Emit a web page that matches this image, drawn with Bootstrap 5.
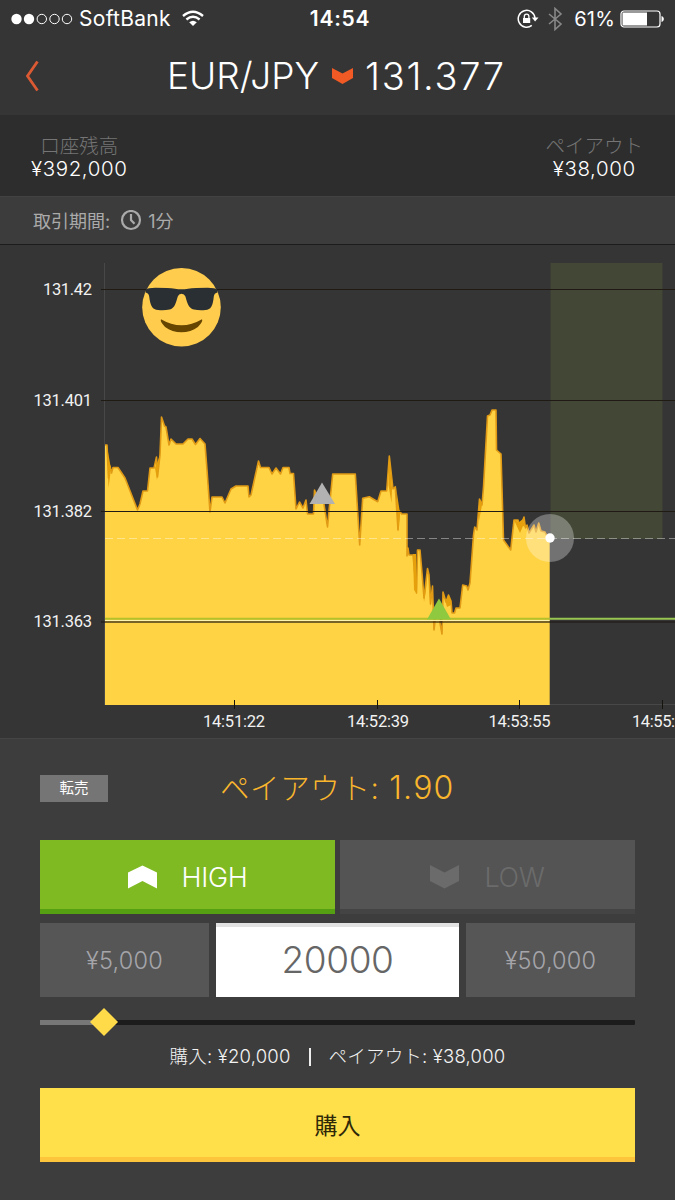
<!DOCTYPE html>
<html lang="ja">
<head>
<meta charset="utf-8">
<meta name="viewport" content="width=device-width, initial-scale=1">
<title>EUR/JPY</title>
<link href="https://cdn.jsdelivr.net/npm/bootstrap@5.3.0/dist/css/bootstrap.min.css" rel="stylesheet">
<style>
body{background:#3d3d3d;color:#fff;font-family:Inter,"Noto Sans CJK JP",sans-serif;font-weight:300;width:675px;height:1200px;overflow:hidden;line-height:1}
svg{display:block;flex:none}
.top-area{background:#353535;height:115px}
.status-row{height:37px;padding:0 11px 0 11px;font-size:20px;font-weight:400}
.status-row .side{width:290px}
.carrier{font-size:21px;letter-spacing:.3px;margin-left:6px;margin-right:11px}
.clock{font-weight:600;font-size:21px;letter-spacing:.7px;margin-left:5px}
.percent{letter-spacing:.2px;margin-left:11px;margin-right:5px}
.title-row{height:78px;padding-left:25px;padding-bottom:1px}
.pair{font-size:37px;margin-left:127px;width:153px}
.rate{font-size:38px;margin-left:12px;letter-spacing:1.7px}
.balance{background:#2d2d2d;height:81px;padding:21px 32px 0 31px;font-size:20.5px}
.balance .cap{color:#757575;font-size:19.5px;line-height:20px;margin-bottom:3px}
.balance .amt{line-height:20px;letter-spacing:.6px}
.period{background:#3c3c3c;height:49px;border-bottom:1px solid #1c1c1c;border-top:1px solid #424242;color:#aaa;font-size:18px;padding-left:33px;font-weight:400}
.period span{padding-top:3px}
.chart{background:#353535;height:493px}
.chart text{font-family:Roboto,sans-serif;font-size:16.5px;font-weight:400;fill:#f2f2f2}
.order{border-top:1px solid #454545;padding:0 40px;height:462px}
.payline{height:101px}
.sell{background:#757575;width:68px;height:27px;font-size:14.5px;font-weight:400;border-radius:0;margin-top:36px}
.payout{color:#f9b62d;font-size:29.5px;margin-left:112px;margin-top:34px;line-height:30px;letter-spacing:.6px}
.payout .multi{font-size:32px;letter-spacing:1.2px;margin-left:1px}
.pick{height:74px;font-size:27px;border-radius:0;border:0;border-bottom:5px solid #559f12;background:#7fba22;width:295px;color:#fff;font-weight:300}
.pick span{padding-top:7px;letter-spacing:-.3px}
.pick svg{margin-top:4px;margin-right:25px}
.pick.off{background:#545454;border-bottom-color:#444;color:#6b6b6b}
.amount{height:74px;background:#565656;color:#a5a5aa;font-size:23.5px;letter-spacing:.2px;width:169px;padding-top:1px}
.amount.entry{background:#fff;border-top:4px solid #e2e2e2;color:#666;font-size:37px;letter-spacing:-.4px;width:243px;padding:0 0 5px}
.slider{height:28px;margin-top:11px}
.track{height:5px;background:#1c1c1c;border-radius:1px}
.track .done{height:5px;background:#777}
.summary{font-size:18.5px;height:21px;margin-top:10px;color:#f3f3f3;letter-spacing:.2px}
.divider{width:2px;height:18px;margin:0 18px;background:#eee}
.buy{height:74px;background:#ffdf4a;border-bottom:5px solid #fdc53b;color:#2e2808;font-size:23px;font-weight:400;margin-top:21px;padding-top:7px}
</style>
</head>
<body>
<header class="top-area">
  <div class="status-row d-flex align-items-center justify-content-between">
    <div class="side d-flex align-items-center">
      <svg width="62" height="12" viewBox="0 0 62 12"><g fill="#fff"><circle cx="5.5" cy="6" r="5.2"/><circle cx="18" cy="6" r="5.2"/></g><g fill="none" stroke="#fff"><circle cx="30.8" cy="6" r="4.7"/><circle cx="43.5" cy="6" r="4.7"/><circle cx="56" cy="6" r="4.7"/></g></svg>
      <span class="carrier">SoftBank</span>
      <svg width="22" height="17" viewBox="0 0 22 17" fill="none" stroke="#fff" stroke-width="2.4"><path d="M1 6Q11-2.5 21 6M4.4 9.5Q11 4 17.6 9.5"/><path d="M11 16L7.2 12.2Q11 9.2 14.8 12.2Z" fill="#fff" stroke="none"/></svg>
    </div>
    <span class="clock">14:54</span>
    <div class="side d-flex align-items-center justify-content-end">
      <svg width="22" height="20" viewBox="0 0 22 20" fill="none" stroke="#fff" stroke-width="1.5"><path d="M14.8 16.4A8.4 8.4 0 1 1 18 9"/><path d="M14.8 8.5H21.5L18.1 12.5Z" fill="#fff" stroke="none"/><path d="M6 9H13.2V14H6Z" fill="#fff" stroke="none"/><path d="M7.3 9V7.5A2.3 2.3 0 0 1 11.9 7.5V9" stroke-width="1.3"/></svg>
      <svg class="ms-2" width="16" height="24" viewBox="0 0 16 24" fill="none" stroke="#888" stroke-width="1.6"><path d="M2 7L14 17L8 22.5V1.5L14 7L2 17"/></svg>
      <span class="percent">61%</span>
      <svg width="44" height="18" viewBox="0 0 44 18"><rect x="1" y="1" width="39" height="16" rx="3" fill="none" stroke="#fff" stroke-width="1.2"/><rect x="2.5" y="2.5" width="24.5" height="13" fill="#fff"/><path d="M41.5 6C44.6 7 44.6 11 41.5 12Z" fill="#fff"/></svg>
    </div>
  </div>
  <div class="title-row d-flex align-items-center">
    <svg width="15" height="32" viewBox="0 0 15 32" fill="none" stroke="#dc5a33" stroke-width="2.8"><path d="M12.5 1.5L2.500 16L12.500 30.500"/></svg>
    <span class="pair text-nowrap">EUR/JPY</span>
    <svg style="margin-left:12px" width="21" height="17" viewBox="0 0 21 17"><path d="M0 1L10.500 6.500L21 1V11L10.500 17L0 11Z" fill="#f15a24"/></svg>
    <span class="rate">131.377</span>
  </div>
</header>
<section class="balance d-flex justify-content-between">
  <div class="text-center"><div class="cap">口座残高</div><div class="amt">¥392,000</div></div>
  <div class="text-center"><div class="cap">ペイアウト</div><div class="amt">¥38,000</div></div>
</section>
<section class="period d-flex align-items-center">
  <span>取引期間:</span>
  <svg style="margin:0 6px 0 10px" width="22" height="22" viewBox="0 0 22 22" fill="none" stroke="#aaa" stroke-width="2.2"><circle cx="11" cy="10" r="9"/><path d="M11 4V10L14.500 13.800"/></svg>
  <span>1分</span>
</section>
<section class="chart">
<svg width="675" height="493" viewBox="0 245 675 493">
  <path d="M104.500 263V705M549 704.500H675" stroke="#484848"/>
  <rect x="550.500" y="263" width="112" height="276" fill="#424736"/>
  <path fill="#ffd343" d="M105 705V445L107 445 108.500 478 110 466 111.500 473 113 467.500H118L125 478 137.500 510 140 504 143 491H147.500L150 468H154L156.500 457 157.500 477 160 455 161.500 417 164.500 426 166 427 169 445 171 439 176 444H183L188 439H192L195.500 444.500 200 438.500 205 444 207 470 210 512 212 497H222L225 503 231 489 236 486H248L249 497 251 495 258.500 461 260.500 467.500H269L272 474 276 468 280.500 474 283 467.500H289L290 473.500H293.500L296 509 299.500 502 303 508 306 500 307.500 514H313.500L314.500 490 318 498H323L327.500 527 329 511 332.700 474H355.300L359.700 545 362.700 498.300 369.300 496.700 377.700 501.700 381 491H386.700L389.300 456 393 489 395.300 486.700 398 530 399.500 511 401.700 514H407V556L408 548 409 555H413L416.500 593 417.500 550H420L422 573 424 598 427.500 568.500 429 575 430.500 604 432.500 586 434 630 436 612H438L442 634 443 592 446 602 448.500 595 451 601 452 613H454.500L456 608H460L462.700 585 466.700 586 468 590 470 583 473.500 535 474.700 527 477 530 479.500 499 482 505 483.500 487 487.500 416 490 415 492 410H496L496.500 450 501 454 503.500 540 510.700 550 514 520H518L520 529 524 517 525.500 528 527 525 529 533 534 525 536 532 538.700 523 541 531 545 532 547 536 549.700 538V705"/>
  <path fill="none" stroke="#e09a16" stroke-width="1.600" stroke-linejoin="round" d="M105 445L107 445 108.500 478 110 466 111.500 473 113 467.500H118L125 478 137.500 510 140 504 143 491H147.500L150 468H154L156.500 457 157.500 477 160 455 161.500 417 164.500 426 166 427 169 445 171 439 176 444H183L188 439H192L195.500 444.500 200 438.500 205 444 207 470 210 512 212 497H222L225 503 231 489 236 486H248L249 497 251 495 258.500 461 260.500 467.500H269L272 474 276 468 280.500 474 283 467.500H289L290 473.500H293.500L296 509 299.500 502 303 508 306 500 307.500 514H313.500L314.500 490 318 498H323L327.500 527 329 511 332.700 474H355.300L359.700 545 362.700 498.300 369.300 496.700 377.700 501.700 381 491H386.700L389.300 456 393 489 395.300 486.700 398 530 399.500 511 401.700 514H407V556L408 548 409 555H413L416.500 593 417.500 550H420L422 573 424 598 427.500 568.500 429 575 430.500 604 432.500 586 434 630 436 612H438L442 634 443 592 446 602 448.500 595 451 601 452 613H454.500L456 608H460L462.700 585 466.700 586 468 590 470 583 473.500 535 474.700 527 477 530 479.500 499 482 505 483.500 487 487.500 416 490 415 492 410H496L496.500 450 501 454 503.500 540 510.700 550 514 520H518L520 529 524 517 525.500 528 527 525 529 533 534 525 536 532 538.700 523 541 531 545 532 547 536 549.700 538"/>
  <path fill="#e5a00c" d="M107 446L108.500 488 111 469ZM155 468L157 480 160 455ZM389.300 456L388.500 485 391.500 503 392 488ZM396 487L398 532 400 513ZM413 554H416L417 594 414 590ZM422 573L424 598 427.500 569 426 590 424 602ZM428.500 570L430.500 588 430.500 609ZM443 592L446 602 448.500 595 451 601V605L447 607ZM479.500 499L482 505 479 521ZM514 520L519 522 523 519 525 527 523 526 520 533Z"/>
  <path d="M101 289.500H675M101 400.500H675M101 511.500H675" stroke="#1f1a14"/>
  <path d="M101 622H675" stroke="#1f1a14" stroke-opacity=".8" stroke-width="1.500"/>
  <path d="M105 620.500H549.500" stroke="#fff3b0" stroke-width="1.200"/>
  <path d="M105 618.800H549.500" stroke="#b5c02d" stroke-width="2"/>
  <path d="M549.500 618.800H675" stroke="#98c650" stroke-width="2"/>
  <path d="M105 538.500H675" stroke="#fff" stroke-opacity=".4" stroke-dasharray="8 4"/>
  <path d="M234.500 700V709M377.500 700V709M519.500 700V709M662.500 700V709" stroke="#17130d"/>
  <path d="M322 482.500L335 504H309.500Z" fill="#b2b2b2"/>
  <path d="M439 598.500L451 619.500H427Z" fill="#8fc93f"/>
  <circle cx="550" cy="538" r="24" fill="#fff" fill-opacity=".3"/><circle cx="550" cy="538" r="4.700" fill="#fff"/>
  <g transform="translate(142.200 268) scale(2.183)"><circle cx="18" cy="18" r="18" fill="#ffcc4d"/><path d="M1.800 9.800Q2.500 9 6 9Q12 9 15 9.500Q18 10 21 9.500Q24 9 30 9Q33.500 9 34.200 9.800L34.500 11.200Q33 11.500 32.800 13C32.300 17.500 31.500 19 29 19.200Q26.200 19.500 23.700 19C21.200 18.500 20.500 15.500 19.800 13Q19.300 11.800 18 11.800Q16.700 11.800 16.300 13C15.500 15.500 15 18.500 12.500 19Q10 19.500 7.300 19.200C4.700 19 3.800 17.500 3.200 13Q3 11.500 1.500 11.200Z" fill="#292f33"/><path d="M8.600 23.500Q18 29 27.400 23.500Q28 24.600 25.500 27C21.500 30.300 14.500 30.300 10.500 27Q8 24.600 8.600 23.500Z" fill="#664500"/></g>
  <g text-anchor="end"><text x="92" y="295" textLength="49">131.42</text><text x="92" y="406" textLength="58.500">131.401</text><text x="92" y="517" textLength="58.500">131.382</text><text x="92" y="627" textLength="58.500">131.363</text></g>
  <text x="203" y="727" textLength="62">14:51:22</text><text x="347" y="727" textLength="62">14:52:39</text><text x="488.500" y="727" textLength="62">14:53:55</text><text x="632" y="727" textLength="43">14:55:</text>
</svg>
</section>
<section class="order">
  <div class="payline d-flex align-items-start">
    <span class="sell d-flex align-items-center justify-content-center">転売</span>
    <span class="payout text-nowrap">ペイアウト: <span class="multi">1.90</span></span>
  </div>
  <div class="d-flex justify-content-between">
    <button class="pick btn p-0 d-flex align-items-center justify-content-center"><svg width="29" height="24" viewBox="0 0 29 24"><path d="M0 7.500L14.500 .500L29 7.500V23.500L14.500 16L0 23.500Z" fill="#fff"/></svg><span>HIGH</span></button>
    <button class="pick off btn p-0 d-flex align-items-center justify-content-center"><svg width="29" height="24" viewBox="0 0 29 24"><path d="M0 0L14.500 7.500L29 0V16L14.500 23.500L0 16Z" fill="#6b6b6b"/></svg><span>LOW</span></button>
  </div>
  <div class="d-flex justify-content-between" style="margin-top:9px">
    <div class="amount d-flex align-items-center justify-content-center">¥5,000</div>
    <div class="amount entry d-flex align-items-center justify-content-center">20000</div>
    <div class="amount d-flex align-items-center justify-content-center">¥50,000</div>
  </div>
  <div class="slider d-flex align-items-center position-relative">
    <div class="track w-100"><div class="done" style="width:11%"></div></div>
    <svg class="position-absolute" style="left:50px;top:0" width="28" height="28" viewBox="0 0 28 28"><path d="M14 0L28 14L14 28L0 14Z" fill="#ffdb49"/></svg>
  </div>
  <div class="summary d-flex align-items-center justify-content-center text-nowrap"><span>購入: ¥20,000</span><span class="divider"></span><span>ペイアウト: ¥38,000</span></div>
  <div class="buy d-flex align-items-center justify-content-center">購入</div>
</section>
<script src="https://cdn.jsdelivr.net/npm/bootstrap@5.3.0/dist/js/bootstrap.bundle.min.js"></script>
</body>
</html>
